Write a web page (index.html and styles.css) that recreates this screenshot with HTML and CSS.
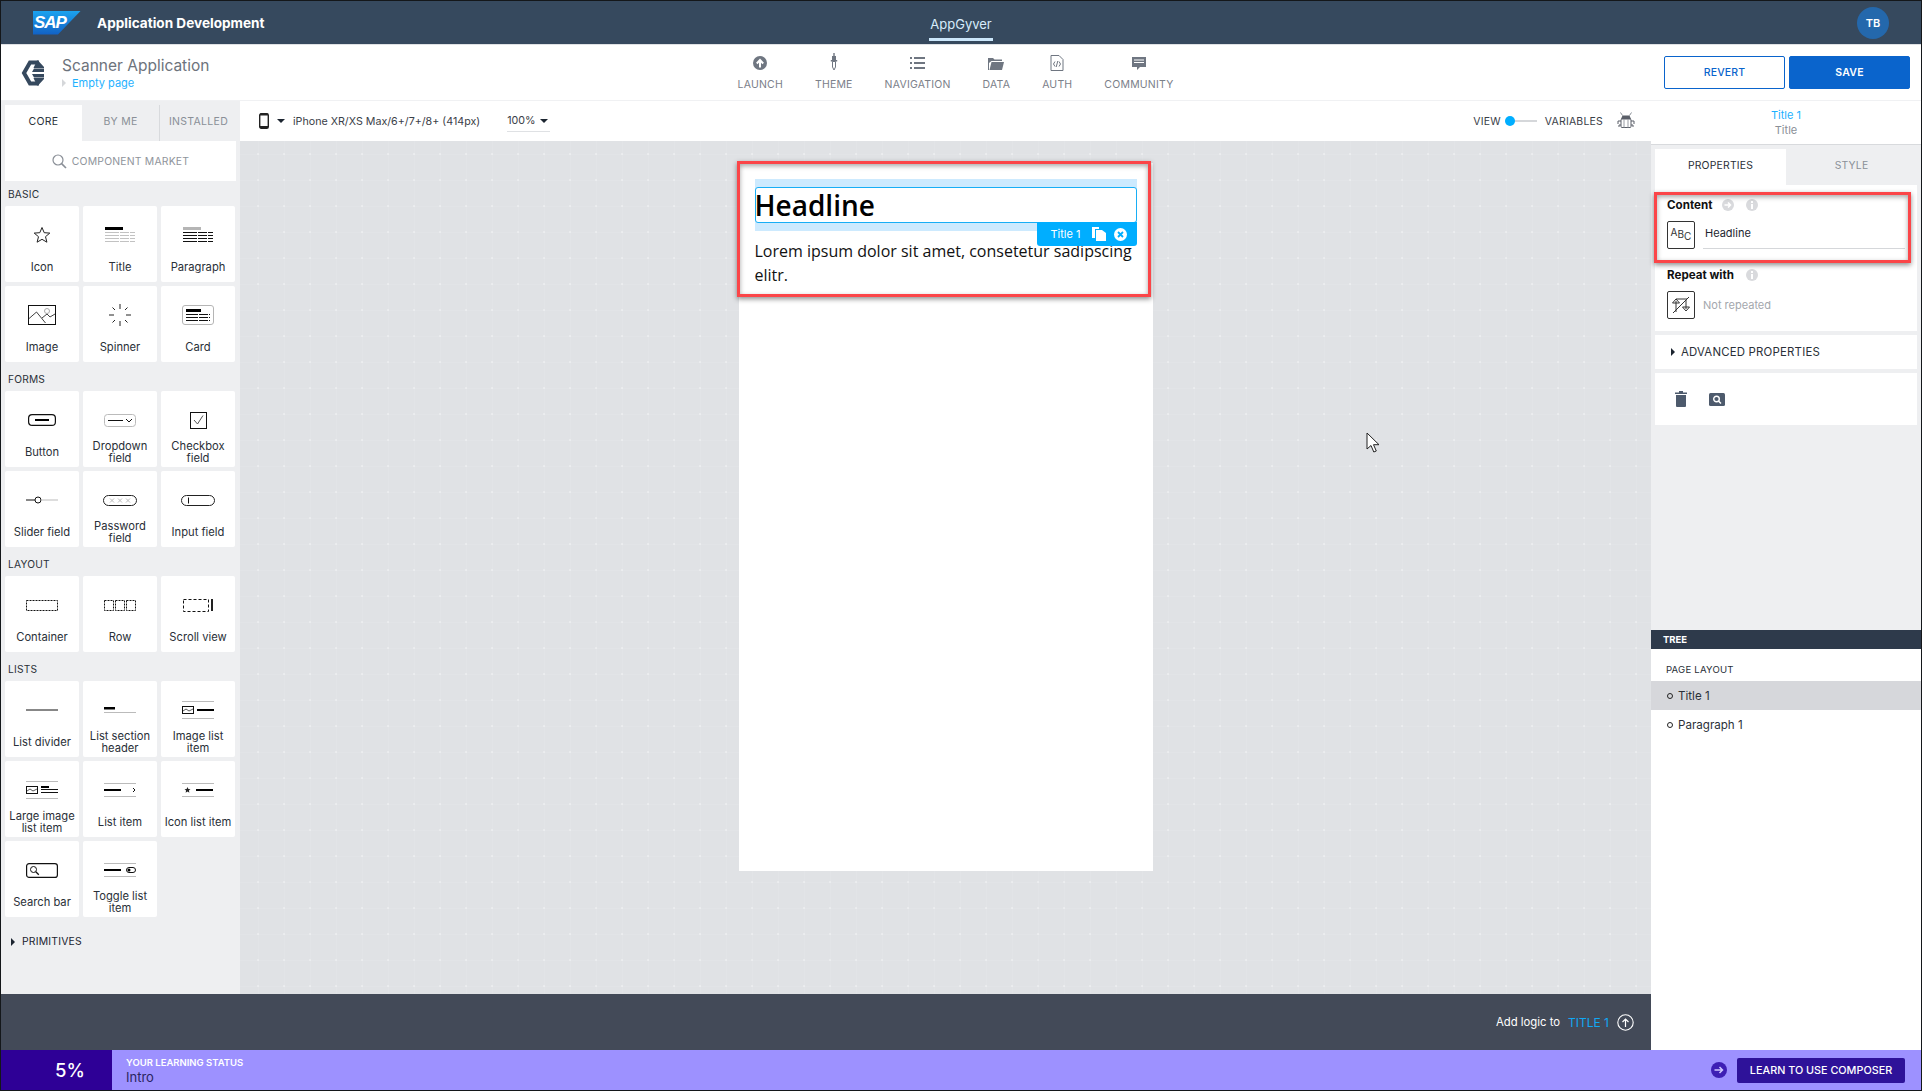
FILE: index.html
```html
<!DOCTYPE html>
<html lang="en">
<head>
    <meta charset="utf-8">
    <title>AppGyver Composer</title>
    <link rel="stylesheet" href="styles.css">
</head>
<body>
<div class="app">

    <!-- Shell bar -->
    <header class="shell">
        <div class="shell-left">
            <div class="sap-logo">SAP</div>
            <span class="shell-title">Application Development</span>
        </div>
        <div class="shell-tab">AppGyver</div>
        <div class="shell-right"><span class="avatar">TB</span></div>
    </header>

    <!-- Composer toolbar -->
    <div class="toolbar">
        <div class="project">
            <svg class="project-logo" width="24" height="26" viewBox="0 0 24 26"><path d="M18 2.5H9L3 13l6 10.5h9" fill="none" stroke="#36495e" stroke-width="4"/><path d="M16 .5h1l6 6.5v1H12.5zM11 12h12V8.500H13zM11 14h12v3.5H13zM12.5 18H23v1l-6 6.500h-1z" fill="#36495e"/></svg>
            <div>
                <div class="project-name">Scanner Application</div>
                <div class="project-page"><i class="page-arrow"></i>Empty page</div>
            </div>
        </div>
        <nav class="nav">
            <a class="nav-item">
                <svg width="16" height="16" viewBox="0 0 16 16"><circle cx="8" cy="8" r="7" fill="#6f7681"/><path d="M8 12.5v-7M4.8 8.5L8 5l3.2 3.5" fill="none" stroke="#fff" stroke-width="2"/></svg>
                LAUNCH
            </a>
            <a class="nav-item">
                <svg width="16" height="18" viewBox="0 0 16 18"><path d="M7.3 0h1.4v3H10v4h1.2v1.500H4.800V7H6V3h1.300z" fill="#6f7681"/><path d="M6.500 8.500h3V14L8 17l-1.500-3z" fill="none" stroke="#6f7681"/></svg>
                THEME
            </a>
            <a class="nav-item">
                <svg width="16" height="16" viewBox="0 0 16 16"><path d="M0 2h2v2H0zM4 2h11v2H4zM0 7h2v2H0zM4 7h11v2H4zM0 12h2v2H0zM4 12h11v2H4z" fill="#6f7681"/></svg>
                NAVIGATION
            </a>
            <a class="nav-item">
                <svg width="16" height="16" viewBox="0 0 16 16"><path d="M0 3h5l1.500 1.500H14V6H3.500L1 8v7H0z" fill="#6f7681"/><path d="M3.500 7H16l-2 8H1.500z" fill="#6f7681"/></svg>
                DATA
            </a>
            <a class="nav-item">
                <svg width="16" height="16" viewBox="0 0 16 16"><path d="M2 .5h8l4 4v11H2z" fill="none" stroke="#6f7681"/><path d="M6 6.500L4.500 9 6 11.500M10 6.500L11.500 9 10 11.500M8.800 6L7.200 12" fill="none" stroke="#6f7681"/></svg>
                AUTH
            </a>
            <a class="nav-item">
                <svg width="16" height="16" viewBox="0 0 16 16"><path d="M1 2h14v10H9l-3 3v-3H1z" fill="#6f7681"/><path d="M3 5h10M3 7.500h10" stroke="#fff"/></svg>
                COMMUNITY
            </a>
        </nav>
        <div class="actions">
            <button class="btn btn-outline">REVERT</button>
            <button class="btn btn-solid">SAVE</button>
        </div>
    </div>

    <div class="workspace">
        <div class="work-main">
            <div class="work-row">

                <!-- Component library -->
                <aside class="library">
                    <div class="lib-tabs">
                        <div class="lib-tab active">CORE</div>
                        <div class="lib-tab">BY ME</div>
                        <div class="lib-tab installed">INSTALLED</div>
                    </div>
                    <div class="market">
                        <svg width="15" height="15" viewBox="0 0 15 15"><circle cx="6" cy="6" r="5" fill="none" stroke="#8a8f97" stroke-width="1.2"/><path d="M9.600 9.600L14 14" stroke="#8a8f97" stroke-width="1.6"/></svg>
                        COMPONENT MARKET
                    </div>

                    <div class="lib-label">BASIC</div>
                    <div class="lib-grid">
                        <div class="card"><div class="card-icon">
                            <svg width="18" height="18" viewBox="0 0 18 18"><path d="M9 1.500l2.200 5.200 5.600.4-4.300 3.600 1.400 5.500L9 13.300l-4.900 2.900 1.400-5.500L1.200 7.100l5.600-.4z" fill="none" stroke="#222"/></svg>
                        </div><div class="card-label">Icon</div></div>
                        <div class="card"><div class="card-icon">
                            <svg width="32" height="18" viewBox="0 0 32 18"><path d="M1 1h18v3H1z"/><path d="M1 6.500h30M1 9.500h30M1 12.500h30M1 15.500h30" stroke="#c2c2c2" stroke-dasharray="14 1 9 1"/></svg>
                        </div><div class="card-label">Title</div></div>
                        <div class="card"><div class="card-icon">
                            <svg width="32" height="18" viewBox="0 0 32 18"><path d="M1 1h18v3H1z" fill="#b5b5b5"/><path d="M1 6.500h30M1 9.500h30M1 12.500h30M1 15.500h30" stroke="#111" stroke-dasharray="14 1 9 1"/></svg>
                        </div><div class="card-label">Paragraph</div></div>
                        <div class="card"><div class="card-icon">
                            <svg width="28" height="20" viewBox="0 0 28 20"><rect x=".5" y=".5" width="27" height="19" fill="none" stroke="#111"/><path d="M.5 14l8-7 9 11M14 13l5-4 3 3 5-3" fill="none" stroke="#111" stroke-width=".8"/><circle cx="19" cy="6" r="2.500" fill="none" stroke="#aaa"/></svg>
                        </div><div class="card-label">Image</div></div>
                        <div class="card"><div class="card-icon">
                            <svg width="24" height="24" viewBox="0 0 24 24"><path d="M12 1v5M12 18v5M1 12h5M18 12h5M4.500 4.500l2.500 2.500M17 17l2.500 2.500M19.500 4.500L17 7M7 17l-2.500 2.500" stroke="#222"/></svg>
                        </div><div class="card-label">Spinner</div></div>
                        <div class="card"><div class="card-icon">
                            <svg width="32" height="20" viewBox="0 0 32 20"><rect x=".5" y=".5" width="31" height="19" rx="2.5" fill="none" stroke="#b5b5b5"/><path d="M4 4h15v3H4z"/><path d="M4 9.500h24M4 12.500h24M4 15.500h24" stroke="#111" stroke-dasharray="12 1 9 1"/></svg>
                        </div><div class="card-label">Card</div></div>
                    </div>

                    <div class="lib-label">FORMS</div>
                    <div class="lib-grid">
                        <div class="card"><div class="card-icon">
                            <svg width="28" height="12" viewBox="0 0 28 12"><rect x=".6" y=".6" width="26.8" height="10.8" rx="3.5" fill="none" stroke="#111" stroke-width="1.2"/><path d="M7 5h14v2H7z"/></svg>
                        </div><div class="card-label">Button</div></div>
                        <div class="card"><div class="card-icon">
                            <svg width="32" height="13" viewBox="0 0 32 13"><rect x=".5" y=".5" width="31" height="12" rx="3" fill="none" stroke="#bbb"/><path d="M4 6.500h15" stroke="#111"/><path d="M22 5l3 3 3-3" fill="none" stroke="#111"/></svg>
                        </div><div class="card-label">Dropdown field</div></div>
                        <div class="card"><div class="card-icon">
                            <svg width="17" height="17" viewBox="0 0 17 17"><rect x=".5" y=".5" width="16" height="16" fill="none" stroke="#111"/><path d="M4 8l3.500 4L13 3.500" fill="none" stroke="#555"/></svg>
                        </div><div class="card-label">Checkbox field</div></div>
                        <div class="card"><div class="card-icon">
                            <svg width="32" height="8" viewBox="0 0 32 8"><path d="M0 4h9" stroke="#111"/><circle cx="12" cy="4" r="3" fill="none" stroke="#111"/><path d="M15 4h17" stroke="#bbb"/></svg>
                        </div><div class="card-label">Slider field</div></div>
                        <div class="card"><div class="card-icon">
                            <svg width="34" height="11" viewBox="0 0 34 11"><rect x=".5" y=".5" width="33" height="10" rx="5" fill="none" stroke="#222"/><path d="M7 3.500l4 4M11 3.500l-4 4M15 3.500l4 4M19 3.500l-4 4M23 3.500l4 4M27 3.500l-4 4" stroke="#bbb"/></svg>
                        </div><div class="card-label">Password field</div></div>
                        <div class="card"><div class="card-icon">
                            <svg width="34" height="11" viewBox="0 0 34 11"><rect x=".5" y=".5" width="33" height="10" rx="5" fill="none" stroke="#222"/><path d="M7.500 2.500v6" stroke="#111"/></svg>
                        </div><div class="card-label">Input field</div></div>
                    </div>

                    <div class="lib-label">LAYOUT</div>
                    <div class="lib-grid">
                        <div class="card"><div class="card-icon">
                            <svg width="32" height="11" viewBox="0 0 32 11"><rect x=".5" y=".5" width="31" height="10" fill="none" stroke="#111" stroke-dasharray="2 1"/></svg>
                        </div><div class="card-label">Container</div></div>
                        <div class="card"><div class="card-icon">
                            <svg width="32" height="11" viewBox="0 0 32 11"><path d="M.5.500h9v10h-9zM11.500.500h9v10h-9zM22.500.500h9v10h-9z" fill="none" stroke="#111" stroke-dasharray="2 1"/></svg>
                        </div><div class="card-label">Row</div></div>
                        <div class="card"><div class="card-icon">
                            <svg width="30" height="13" viewBox="0 0 30 13"><rect x=".5" y=".5" width="25" height="12" fill="none" stroke="#111" stroke-dasharray="3 2"/><path d="M28 0h2v12h-2z" fill="#222"/></svg>
                        </div><div class="card-label">Scroll view</div></div>
                    </div>

                    <div class="lib-label">LISTS</div>
                    <div class="lib-grid">
                        <div class="card"><div class="card-icon">
                            <svg width="32" height="4" viewBox="0 0 32 4"><path d="M0 2h32" stroke="#111"/></svg>
                        </div><div class="card-label">List divider</div></div>
                        <div class="card"><div class="card-icon">
                            <svg width="32" height="6" viewBox="0 0 32 6"><path d="M0 0h11v2.500H0z"/><path d="M0 5.500h32" stroke="#bbb"/></svg>
                        </div><div class="card-label">List section header</div></div>
                        <div class="card"><div class="card-icon">
                            <svg width="32" height="18" viewBox="0 0 32 18"><path d="M0 .500h32M0 17.500h32" stroke="#bbb"/><rect x=".5" y="5.5" width="11" height="7" fill="none" stroke="#111"/><path d="M1 10l3-2 3 2 4-2" fill="none" stroke="#111" stroke-width=".7"/><path d="M15 8h17v2H15z"/></svg>
                        </div><div class="card-label">Image list item</div></div>
                        <div class="card"><div class="card-icon">
                            <svg width="32" height="18" viewBox="0 0 32 18"><path d="M0 .500h32M0 17.500h32" stroke="#bbb"/><rect x=".5" y="5.5" width="11" height="7" fill="none" stroke="#111"/><path d="M1 10l3-2 3 2 4-2" fill="none" stroke="#111" stroke-width=".7"/><path d="M15 5h8v2h-8z"/><path d="M15 8.500h17M15 11.500h17" stroke="#111"/></svg>
                        </div><div class="card-label">Large image list item</div></div>
                        <div class="card"><div class="card-icon">
                            <svg width="32" height="14" viewBox="0 0 32 14"><path d="M0 .500h32M0 13.500h32" stroke="#bbb"/><path d="M0 6h17v2H0z"/><path d="M29 5l2 2-2 2" fill="none" stroke="#111"/></svg>
                        </div><div class="card-label">List item</div></div>
                        <div class="card"><div class="card-icon">
                            <svg width="32" height="14" viewBox="0 0 32 14"><path d="M0 .500h32M0 13.500h32" stroke="#bbb"/><path d="M5.500 4l.9 2 2.100.2-1.600 1.400.5 2.100-1.900-1.100-1.900 1.100.5-2.100-1.600-1.400 2.100-.2z" fill="#222"/><path d="M14 6h17v2H14z"/></svg>
                        </div><div class="card-label">Icon list item</div></div>
                        <div class="card"><div class="card-icon">
                            <svg width="32" height="15" viewBox="0 0 32 15"><rect x=".6" y=".6" width="30.8" height="13.8" rx="2.5" fill="none" stroke="#111" stroke-width="1.2"/><circle cx="7.5" cy="6.5" r="3" fill="none" stroke="#111"/><path d="M9.800 8.800l3 3" stroke="#111" stroke-width="1.3"/></svg>
                        </div><div class="card-label">Search bar</div></div>
                        <div class="card"><div class="card-icon">
                            <svg width="32" height="14" viewBox="0 0 32 14"><path d="M0 .500h32M0 13.500h32" stroke="#bbb"/><path d="M0 6h17v2H0z"/><rect x="22.5" y="4.5" width="9" height="5" rx="2.5" fill="none" stroke="#111"/><circle cx="25" cy="7" r="1.5"/></svg>
                        </div><div class="card-label">Toggle list item</div></div>
                    </div>

                    <div class="primitives"><i class="tri"></i>PRIMITIVES</div>
                </aside>

                <!-- Canvas -->
                <section class="stage">
                    <div class="viewbar">
                        <svg width="10" height="16" viewBox="0 0 10 16"><rect x=".7" y=".7" width="8.6" height="14.6" rx="1.5" fill="none" stroke="#222" stroke-width="1.4"/><path d="M1 2.500h8v-2H1zM1 15h8v-2H1z" fill="#222"/></svg>
                        <i class="caret device-caret"></i>
                        <span class="device">iPhone XR/XS Max/6+/7+/8+ (414px)</span>
                        <span class="zoom-select">100%<i class="caret"></i></span>
                        <div class="view-switch">
                            <span>VIEW</span>
                            <span class="switch"></span>
                            <span>VARIABLES</span>
                            <svg class="bug" width="18" height="16" viewBox="0 0 18 16"><path d="M5.500 3.500h7l1.500 3.500H4z" fill="#5a5f68"/><path d="M5.500 3.500L3.500.5M12.500 3.500l2-3" stroke="#8a8f97"/><rect x="4" y="7" width="10" height="8.5" rx="1" fill="none" stroke="#5a5f68"/><path d="M7 7v8.500M11 7v8.500" stroke="#9a9ea5"/><path d="M4 9H1v3M14 9h3v3M4 13H2v2M14 13h2v2" fill="none" stroke="#5a5f68"/></svg>
                        </div>
                    </div>
                    <div class="canvas">
                        <div class="phone">
                            <div class="title-wrap">
                                <div class="title-box">Headline</div>
                                <div class="title-tag">
                                    <span>Title 1</span>
                                    <svg width="14" height="14" viewBox="0 0 14 14"><path d="M0 0h7v2H3v9H0z" fill="#fff"/><path d="M4 3h6l4 3v8H4z" fill="#fff"/></svg>
                                    <svg width="13" height="13" viewBox="0 0 13 13"><circle cx="6.5" cy="6.5" r="6.5" fill="#fff"/><path d="M4 4l5 5M9 4l-5 5" stroke="#00aeff" stroke-width="1.8"/></svg>
                                </div>
                            </div>
                            <p class="lorem">Lorem ipsum dolor sit amet, consetetur sadipscing elitr.</p>
                        </div>
                        <div class="callout callout-canvas"></div>
                        <svg class="cursor" width="15" height="21" viewBox="0 0 15 21"><path d="M1 1v16l4-3.500 2.800 6.500 2.500-1-2.800-6.300H13z" fill="#fff" stroke="#222"/></svg>
                    </div>
                </section>
            </div>

            <div class="logic-bar">
                <span>Add logic to</span>
                <span class="logic-target">TITLE 1</span>
                <svg width="17" height="17" viewBox="0 0 17 17"><circle cx="8.5" cy="8.5" r="7.7" fill="none" stroke="#fff" stroke-width="1.1"/><path d="M8.500 13V5M5.500 8l3-3 3 3" fill="none" stroke="#fff" stroke-width="1.2"/></svg>
            </div>
        </div>

        <!-- Inspector -->
        <aside class="inspector">
            <div class="selected">
                <div class="selected-name">Title 1</div>
                <div class="selected-type">Title</div>
            </div>
            <div class="insp-body">
                <div class="insp-tabs">
                    <div class="insp-tab active">PROPERTIES</div>
                    <div class="insp-tab">STYLE</div>
                </div>
                <div class="panel panel-props">
                    <div class="prop-label">
                        Content
                        <svg width="12" height="12" viewBox="0 0 12 12"><circle cx="6" cy="6" r="6" fill="#d9dadd"/><path d="M2.500 6h6M6 3.500L8.500 6 6 8.500" fill="none" stroke="#fff" stroke-width="1.5"/></svg>
                        <svg class="info" width="12" height="12" viewBox="0 0 12 12"><circle cx="6" cy="6" r="6" fill="#d9dadd"/><path d="M5 5h2v5H5zM5 2h2v2H5z" fill="#fff"/></svg>
                    </div>
                    <div class="prop-row">
                        <div class="prop-type abc"><span>A</span><span class="abc-b">B</span><span class="abc-c">C</span></div>
                        <div class="prop-value">Headline</div>
                    </div>
                    <div class="prop-label prop-label-repeat">
                        Repeat with
                        <svg class="info" width="12" height="12" viewBox="0 0 12 12"><circle cx="6" cy="6" r="6" fill="#d9dadd"/><path d="M5 5h2v5H5zM5 2h2v2H5z" fill="#fff"/></svg>
                    </div>
                    <div class="prop-row">
                        <div class="prop-type">
                            <svg width="20" height="20" viewBox="0 0 20 20"><path d="M5 17V6M1.500 8L5 4l3.500 4zM15 3v11M11.500 12l3.500 4 3.500-4zM2 18L18 2M5 4h9" fill="none" stroke="#333"/></svg>
                        </div>
                        <div class="prop-empty">Not repeated</div>
                    </div>
                </div>
                <div class="panel panel-advanced"><i class="tri"></i>ADVANCED PROPERTIES</div>
                <div class="panel panel-tools">
                    <svg width="12" height="16" viewBox="0 0 12 16"><path d="M0 1.500h4V0h4v1.500h4V3H0zM1 4h10v11.500l-1 .5H2l-1-.5z" fill="#4d5a6c"/></svg>
                    <svg width="16" height="13" viewBox="0 0 16 13"><rect width="16" height="13" rx="1.5" fill="#4d5a6c"/><circle cx="7.5" cy="6" r="2.8" fill="none" stroke="#fff" stroke-width="1.4"/><path d="M9.500 8l2.500 2.500" stroke="#fff" stroke-width="1.5"/></svg>
                </div>
                <div class="callout callout-insp"></div>
            </div>
            <div class="tree-head">TREE</div>
            <div class="tree">
                <div class="tree-label">PAGE LAYOUT</div>
                <div class="tree-row active"><i class="dot"></i>Title 1</div>
                <div class="tree-row"><i class="dot"></i>Paragraph 1</div>
            </div>
        </aside>
    </div>

    <!-- Learning status -->
    <footer class="learning">
        <div class="percent">5%</div>
        <div class="status">
            <div class="status-label">YOUR LEARNING STATUS</div>
            <div class="status-name">Intro</div>
        </div>
        <svg width="16" height="16" viewBox="0 0 16 16"><circle cx="8" cy="8" r="8" fill="#3d1fb4"/><path d="M3.500 8h8M8.500 5l3 3-3 3" fill="none" stroke="#cfc8ff" stroke-width="1.5"/></svg>
        <button class="learn-btn">LEARN TO USE COMPOSER</button>
    </footer>
</div>
</body>
</html>
```

FILE: styles.css
```css
* {
    box-sizing: border-box;
    margin: 0;
    padding: 0;
}

body {
    font-family: Inter, "Liberation Sans", sans-serif;
    background: #fff;
    color: #1c2530;
}

svg {
    display: block;
    flex: none;
}

.app {
    width: 1922px;
    height: 1091px;
    border: 1px solid #14171a;
    display: flex;
    flex-direction: column;
    overflow: hidden;
}

/* Shell bar */
.shell {
    height: 43px;
    flex: none;
    background: #36495e;
    display: flex;
    align-items: stretch;
    color: #fff;
}

.shell-left {
    flex: 1 1 0;
    display: flex;
    align-items: center;
    padding-left: 32px;
}

.sap-logo {
    width: 48px;
    height: 24px;
    background: linear-gradient(180deg, #1ca3ef, #1160c4);
    clip-path: polygon(0 0, 100% 0, 52% 100%, 0 100%);
    font: italic bold 17px/24px "Liberation Sans", sans-serif;
    letter-spacing: -1px;
    padding-left: 1px;
    color: #fff;
}

.shell-title {
    margin-left: 16px;
    font-size: 13.6px;
    font-weight: 700;
}

.shell-tab {
    font-size: 13px;
    color: #d7ecfb;
    padding: 0 1px;
    line-height: 46px;
    height: 40px;
    border-bottom: 3px solid #cbe6fa;
}

.shell-right {
    flex: 1 1 0;
    display: flex;
    align-items: center;
    justify-content: flex-end;
    padding-right: 32px;
}

.avatar {
    width: 32px;
    height: 32px;
    border-radius: 50%;
    background: #2468ac;
    font-size: 11px;
    font-weight: 600;
    line-height: 32px;
    text-align: center;
}

/* Toolbar */
.toolbar {
    height: 57px;
    flex: none;
    display: flex;
    align-items: center;
    border-top: 1px solid #dfe1e4;
    border-bottom: 1px solid #f0f1f3;
}

.project {
    flex: 1 1 0;
    display: flex;
    align-items: center;
    padding-left: 20px;
    gap: 17px;
}

.project-name {
    font-size: 15.5px;
    line-height: 20px;
    color: #6d737c;
}

.project-page {
    font-size: 11px;
    line-height: 14px;
    color: #1eb1ff;
    display: flex;
    align-items: center;
}

.page-arrow {
    width: 0;
    height: 0;
    border-left: 4px solid #d5d7da;
    border-top: 4px solid transparent;
    border-bottom: 4px solid transparent;
    margin-right: 6px;
}

.nav {
    display: flex;
    gap: 32px;
    margin-right: 20px;
}

.nav-item {
    display: flex;
    flex-direction: column;
    align-items: center;
    justify-content: flex-end;
    gap: 8px;
    height: 36px;
    font-size: 10.5px;
    letter-spacing: .2px;
    line-height: 12px;
    color: #7b8089;
}

.actions {
    flex: 1 1 0;
    display: flex;
    justify-content: flex-end;
    gap: 4px;
    padding-right: 11px;
}

.btn {
    width: 121px;
    height: 33px;
    border-radius: 2px;
    font-family: inherit;
    font-size: 10.5px;
    font-weight: 500;
    letter-spacing: .2px;
}

.btn-outline {
    background: #fff;
    border: 1px solid #0a64cc;
    color: #0a64cc;
}

.btn-solid {
    background: #0a64cc;
    border: 1px solid #0a64cc;
    color: #fff;
    font-weight: 600;
}

/* Layout */
.workspace {
    flex: 1;
    display: flex;
    min-height: 0;
}

.work-main {
    flex: 1;
    display: flex;
    flex-direction: column;
    min-width: 0;
}

.work-row {
    flex: 1;
    display: flex;
    min-height: 0;
}

/* Component library */
.library {
    width: 239px;
    flex: none;
    background: #eeeff1;
    padding: 4px 0 0 4px;
}

.lib-tabs {
    display: flex;
    height: 36px;
}

.lib-tab {
    width: 77px;
    font-size: 10.5px;
    letter-spacing: .3px;
    line-height: 34px;
    text-align: center;
    color: #8a8f97;
}

.lib-tab.active {
    background: #fff;
    color: #2a3038;
}

.lib-tab.installed {
    width: 78px;
    border-left: 1px solid #d8dadd;
}

.market {
    width: 231px;
    height: 40px;
    background: #fff;
    display: flex;
    align-items: center;
    justify-content: center;
    gap: 5px;
    font-size: 10.4px;
    letter-spacing: .2px;
    color: #8f949b;
}

.lib-label {
    height: 25px;
    padding: 7px 0 0 3px;
    font-size: 10.2px;
    line-height: 12px;
    letter-spacing: .2px;
    color: #2a3038;
}

.lib-grid {
    display: grid;
    grid-template-columns: repeat(3, 74px);
    grid-auto-rows: 76px;
    gap: 4px;
    margin-bottom: 4px;
}

.card {
    background: #fff;
    border-radius: 2px;
}

.card-icon {
    height: 41px;
    margin-top: 9px;
    padding-bottom: 1px;
    display: flex;
    align-items: center;
    justify-content: center;
}

.card-label {
    height: 22px;
    display: flex;
    align-items: center;
    justify-content: center;
    text-align: center;
    font-size: 11.2px;
    line-height: 12px;
    color: #2a3038;
    padding: 0 1px;
}

.primitives {
    margin-top: 19px;
    padding-left: 6px;
    display: flex;
    align-items: center;
    font-size: 10.4px;
    letter-spacing: .2px;
    line-height: 12px;
}

.primitives .tri {
    margin-right: 7px;
}

.tri {
    width: 0;
    height: 0;
    border-left: 4px solid #1c2530;
    border-top: 4px solid transparent;
    border-bottom: 4px solid transparent;
    margin-right: 8px;
}

/* Canvas */
.stage {
    flex: 1;
    display: flex;
    flex-direction: column;
    min-width: 0;
}

.viewbar {
    height: 40px;
    flex: none;
    display: flex;
    align-items: center;
    padding: 0 16px 0 19px;
    font-size: 10.7px;
    color: #3a4048;
}

.caret {
    display: inline-block;
    width: 0;
    height: 0;
    border-top: 4px solid #1c2530;
    border-left: 4px solid transparent;
    border-right: 4px solid transparent;
}

.device-caret {
    margin-left: 8px;
}

.device {
    margin-left: 8px;
}

.zoom-select {
    margin-left: 27px;
    padding: 4px 2px 4px 0;
    border-bottom: 1px solid #dfe1e4;
    display: flex;
    align-items: center;
    gap: 4px;
}

.view-switch {
    margin-left: auto;
    display: flex;
    align-items: center;
    gap: 8px;
    font-size: 10.5px;
    letter-spacing: .2px;
}

.view-switch .bug {
    margin: 0 0 2px 6px;
}

.switch {
    width: 32px;
    height: 2px;
    margin-left: -4px;
    background: #d5d7da;
    position: relative;
}

.switch::before {
    content: "";
    position: absolute;
    left: 0;
    top: -4px;
    width: 10px;
    height: 10px;
    border-radius: 50%;
    background: #00aeff;
}

.canvas {
    flex: 1;
    position: relative;
    background-color: #e0e2e5;
    background-image:
        radial-gradient(circle, rgba(255, 255, 255, .3) .8px, transparent 1.5px),
        linear-gradient(rgba(255, 255, 255, .08) 1px, transparent 1px),
        linear-gradient(90deg, rgba(255, 255, 255, .08) 1px, transparent 1px);
    background-size: 26px 26px;
    background-position: 5px 0, 0 13px, 18px 0;
    overflow: hidden;
}

.phone {
    width: 414px;
    height: 708px;
    margin: 22px auto 0;
    padding: 16px 16px 0;
    background: #fff;
}

.title-wrap {
    position: relative;
    padding: 8px 0;
    background: #cdeafe;
}

.title-box {
    height: 36px;
    background: #fff;
    border: 1px solid #18aef5;
    border-radius: 3px;
    font: 600 28px/35px "Open Sans", sans-serif;
    color: #000;
    text-indent: -1px;
}

.title-tag {
    position: absolute;
    right: 0;
    top: 43px;
    width: 100px;
    height: 24px;
    background: #00aeff;
    border-radius: 0 0 3px 3px;
    color: #fff;
    font-size: 11px;
    display: flex;
    align-items: center;
    padding-left: 14px;
    gap: 8px;
}

.title-tag span {
    margin-right: 3px;
}

.lorem {
    margin-top: 8px;
    font: 16px/24px "Open Sans", sans-serif;
    color: #111;
}

/* Annotation rectangles sit on top of the screenshot */
.callout {
    position: absolute;
    border: 3px solid #fb4548;
    box-shadow: 0 2px 5px rgba(0, 0, 0, .45), inset 0 2px 5px rgba(0, 0, 0, .35);
    pointer-events: none;
}

.callout-canvas {
    left: 497px;
    top: 20px;
    width: 414px;
    height: 136px;
}

.callout-insp {
    left: 3px;
    top: 47px;
    width: 257px;
    height: 71px;
}

.cursor {
    position: absolute;
    left: 1126px;
    top: 291px;
}

.logic-bar {
    height: 56px;
    flex: none;
    background: #434a58;
    color: #fff;
    display: flex;
    align-items: center;
    justify-content: flex-end;
    gap: 8px;
    padding-right: 17px;
    font-size: 11.3px;
}

.logic-target {
    color: #11a8f5;
    font-size: 12px;
}

/* Inspector */
.inspector {
    width: 270px;
    flex: none;
    display: flex;
    flex-direction: column;
    background: #fff;
}

.selected {
    height: 44px;
    flex: none;
    text-align: center;
    border-bottom: 1px solid #d8dadd;
    padding-top: 7px;
    font-size: 11px;
    line-height: 15px;
}

.selected-name {
    color: #1eb1ff;
}

.selected-type {
    color: #8a8f97;
}

.insp-body {
    height: 485px;
    flex: none;
    position: relative;
    background: #eeeff1;
    padding: 4px 4px 0;
}

.insp-tabs {
    display: flex;
    height: 36px;
}

.insp-tab {
    width: 131px;
    font-size: 10.4px;
    letter-spacing: .2px;
    line-height: 34px;
    text-align: center;
    color: #8a8f97;
}

.insp-tab.active {
    background: #fff;
    color: #2a3038;
}

.panel {
    background: #fff;
    margin-bottom: 4px;
    width: 262px;
}

.panel-props {
    height: 146px;
    padding: 13px 12px 0;
}

.prop-label {
    display: flex;
    align-items: center;
    height: 14px;
    font-size: 11.6px;
    font-weight: 700;
    color: #111;
}

.prop-label svg {
    margin-left: 10px;
}

.prop-label svg.info {
    margin-left: 12px;
}

.prop-label-repeat {
    margin-top: 19px;
}

.prop-row {
    display: flex;
    align-items: center;
    margin-top: 9px;
    height: 28px;
}

.prop-type {
    width: 28px;
    height: 28px;
    flex: none;
    border: 1px solid #333;
    border-radius: 2px;
    display: flex;
    align-items: center;
    justify-content: center;
}

.abc {
    font-size: 10px;
    color: #333;
}

.abc span {
    transform: translateY(-3px);
}

.abc .abc-b {
    transform: translateY(-1px);
}

.abc .abc-c {
    transform: translateY(1px);
}

.prop-value {
    flex: 1;
    height: 28px;
    margin-left: 8px;
    padding-left: 2px;
    font-size: 11px;
    line-height: 24px;
    border-bottom: 1px solid #d5d7da;
}

.prop-empty {
    margin-left: 8px;
    font-size: 11px;
    color: #a3a7ad;
}

.panel-advanced {
    height: 34px;
    padding-left: 16px;
    display: flex;
    align-items: center;
    font-size: 11.4px;
    letter-spacing: .2px;
    color: #2a3038;
}

.panel-advanced .tri {
    margin-right: 6px;
}

.panel-tools {
    height: 52px;
    display: flex;
    align-items: center;
    padding-left: 20px;
    gap: 22px;
}

.tree-head {
    height: 19px;
    flex: none;
    background: #2e3a4b;
    color: #fff;
    font-size: 9.5px;
    font-weight: 700;
    line-height: 19px;
    padding-left: 12px;
}

.tree {
    flex: 1;
}

.tree-label {
    height: 32px;
    padding: 15px 0 0 15px;
    font-size: 9.6px;
    line-height: 12px;
    letter-spacing: .2px;
    color: #2a3038;
}

.tree-row {
    height: 29px;
    display: flex;
    align-items: center;
    padding-left: 16px;
    font-size: 11.6px;
    color: #2a3038;
}

.tree-row.active {
    background: #d6d7db;
}

.dot {
    width: 6px;
    height: 6px;
    border: 1px solid #222;
    border-radius: 50%;
    margin-right: 5px;
}

/* Learning status */
.learning {
    height: 40px;
    flex: none;
    background: #9d91ff;
    display: flex;
    align-items: center;
    padding-right: 16px;
}

.percent {
    width: 111px;
    height: 40px;
    padding-left: 54px;
    background: #2e0096;
    color: #fff;
    font-size: 18.5px;
    font-weight: 500;
    line-height: 40px;
}

.status {
    flex: 1;
    padding-left: 14px;
}

.status-label {
    font-size: 9.5px;
    font-weight: 600;
    line-height: 13px;
    color: #fff;
    padding-top: 1px;
}

.status-name {
    font-size: 13px;
    line-height: 16px;
    color: #2a2560;
}

.learn-btn {
    width: 168px;
    height: 25px;
    margin-left: 10px;
    border: 0;
    border-radius: 2px;
    background: #2e1299;
    color: #fff;
    font-family: inherit;
    font-size: 10.8px;
    font-weight: 500;
}
```
